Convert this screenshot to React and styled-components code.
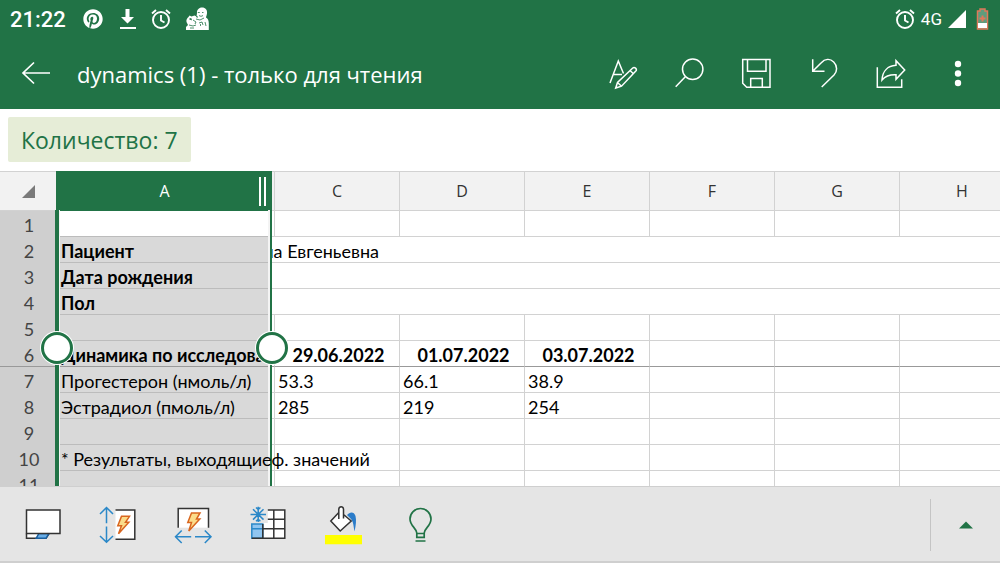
import React from "react";
import styled, { createGlobalStyle, css } from "styled-components";
import { FaPinterest } from "react-icons/fa";

const green = "#217346";
const line = "#d2d2d2";
const uiFont = `"Open Sans", "Noto Sans", sans-serif`;
const cellFont = `Lato, "Noto Sans", sans-serif`;

const GlobalStyle = createGlobalStyle`
  * { box-sizing: border-box; }
  body { margin: 0; background: #fff; font-family: ${uiFont}; overflow: hidden; }
  button { border: 0; padding: 0; margin: 0; background: none; color: inherit; font: inherit; cursor: pointer; }
`;

const Page = styled.div`
  display: flex;
  flex-direction: column;
  height: 100vh;
`;

const AppHeader = styled.header`
  flex: none;
  background: ${green};
  color: #fff;
`;

const StatusBar = styled.div`
  display: flex;
  align-items: center;
  height: 38px;
  padding: 0 6px 0 10px;
  font-family: Roboto, sans-serif;
`;

const Clock = styled.time`
  width: 73px;
  font-size: 22px;
  font-weight: 500;
`;

const StatusIcons = styled.div`
  display: flex;
  align-items: center;
  gap: 14px;
  flex: 1;
`;

const Signals = styled.div`
  display: flex;
  align-items: center;
  gap: 6px;
  font-size: 17px;
`;

const TitleBar = styled.div`
  display: flex;
  align-items: center;
  height: 71px;
  padding: 0 10px 0 2px;
`;

const BackButton = styled.button`
  display: grid;
  place-items: center;
  width: 68px;
  height: 56px;
`;

const Title = styled.h1`
  flex: 1;
  margin: 0;
  padding-left: 7px;
  font-size: 22px;
  line-height: 30px;
  font-weight: 400;
  white-space: nowrap;
`;

const Actions = styled.nav`
  display: flex;
`;

const ActionButton = styled.button`
  display: grid;
  place-items: center;
  width: 67px;
  height: 56px;
`;

const Summary = styled.div`
  flex: none;
  padding: 8px;
  height: 62px;
`;

const SummaryChip = styled.output`
  display: inline-block;
  padding: 1px 13px 0;
  border-radius: 2px;
  background: #e6edd7;
  color: ${green};
  font-size: 23px;
  line-height: 44px;
  white-space: nowrap;
`;

const Sheet = styled.main`
  position: relative;
  flex: 1;
  min-height: 0;
  overflow: hidden;
`;

const Grid = styled.table`
  table-layout: fixed;
  width: 1025px;
  min-width: 100%;
  border-collapse: separate;
  border-spacing: 0;
  font-family: ${cellFont};
  font-size: 18px;
  color: #000;
`;

const ColumnHead = styled.th`
  height: 40px;
  padding: 0;
  border-top: 1px solid ${line};
  border-bottom: 1px solid ${line};
  border-right: 1px solid ${line};
  background: #f2f2f2;
  color: #333;
  font-family: ${uiFont};
  font-size: 16px;
  font-weight: 400;
  ${(p) => p.$selected && css`
    border-color: ${green};
    background: ${green};
    color: #fff;
  `}
  ${(p) => p.$corner && css`
    border-right: 0;
  `}
`;

const HeadContent = styled.div`
  display: grid;
  grid-template-columns: 14px 1fr 12px;
  align-items: center;
`;

const ResizeGrip = styled.span`
  width: 7px;
  height: 29px;
  border: solid #fff;
  border-width: 0 2px;
`;

const CornerMark = styled.span`
  display: block;
  width: 0;
  margin: 0 0 0 22px;
  border-left: 13px solid transparent;
  border-bottom: 13px solid #7a7a7a;
`;

const RowHead = styled.th`
  height: 26px;
  padding: 2px 0 0 2px;
  border-bottom: 1px solid ${(p) => (p.$frozen ? "#999" : "#cfcfcf")};
  background: #cfcfcf;
  color: #444;
  font-size: 18px;
  line-height: 20px;
  font-weight: 400;
`;

const Cell = styled.td`
  height: 26px;
  padding: 2px 0 0 ${(p) => (p.$hidden ? 0 : p.$selected ? 5 : 3)}px;
  border-bottom: 1px solid ${(p) => (p.$frozen ? "#999" : p.$selected ? "#bcbcbc" : line)};
  border-right: 1px solid ${line};
  background: ${(p) => (p.$selected && !p.$active ? "#d9d9d9" : "#fff")};
  font-weight: ${(p) => (p.$bold ? 700 : 400)};
  text-align: ${(p) => (p.$center ? "center" : "left")};
  line-height: 20px;
  white-space: nowrap;
  ${(p) => p.$selected && css`
    border-right: 0;
    text-align: left;
  `}
`;

const Spill = styled.span`
  position: relative;
  z-index: 2;
`;

const ClippedLeft = styled.div`
  display: flex;
  justify-content: flex-end;
  width: 107px;
  overflow: hidden;
`;

const ClippedRight = styled.div`
  overflow: hidden;
`;

const SelectionFrame = styled.div`
  position: absolute;
  z-index: 1;
  top: 39px;
  bottom: 0;
  left: 55px;
  width: 217px;
  border: solid ${green};
  border-width: 0 2px 0 4px;
  box-shadow: inset 1px 0 #f4f4f4, inset -2px 0 #f4f4f4;
  pointer-events: none;
`;

const Handle = styled.span`
  position: absolute;
  z-index: 3;
  top: 161px;
  left: ${(p) => p.$left}px;
  width: 32px;
  height: 32px;
  border: 3px solid ${green};
  border-radius: 50%;
  background: #fff;
  box-shadow: 0 0 0 1px #fff;
`;

const Toolbar = styled.footer`
  display: flex;
  flex: none;
  align-items: center;
  height: 77px;
  padding: 1px 0 0 5px;
  border-top: 1px solid #cfcfcf;
  border-bottom: 2px solid #cfcfcf;
  background: #e5e5e5;
`;

const ToolButton = styled.button`
  display: grid;
  place-items: center;
  width: 75px;
  height: 56px;
`;

const ExpandButton = styled.button`
  display: grid;
  place-items: center;
  width: 70px;
  height: 52px;
  margin-left: auto;
  border-left: 1px solid #c4c4c4;
`;

const Icon = ({ size = 32, width = 1.3, children, ...rest }) => (
  <svg width={size} height={size} viewBox={`0 0 ${size} ${size}`} fill="none" stroke="currentColor" strokeWidth={width} aria-hidden="true" {...rest}>
    {children}
  </svg>
);

const Alarm = () => (
  <Icon size={20} width={1.9}>
    <circle cx="10" cy="11" r="8" />
    <path d="M10 6v5.5l3.500 2M1 4.500 5 1M19 4.500 15 1" />
  </Icon>
);

const Statue = () => (
  <Icon size={24} width={0.8}>
    <path fill="#fff" stroke="none" d="M12 6c-.5-3 2-5.500 5-5.500 3.500 0 5.500 2.500 5 6-.2 2-1 3-1 4 2 1 2.800 3 2.800 6V23H1v-3l2-2-1.500-3c-.5-2 .5-4 2-5l1-1.500 2 1 3-1 2 1z" />
    <path stroke={green} d="M12.800 5.500h2M17 5.500h1.500M14 8.500c1.500 1 2.500 1 4 0M11 12l4 1 4-2M5 12l2 1M8 13l3 2-1 2M4 18l4 1 3-1M14 16l3-1 1 3M5 21h4M20 15l1 4" />
    <path stroke={green} strokeWidth="1.300" d="M4.500 12h2M11.500 9l1 1.500M15 18h1" />
  </Icon>
);

const actions = [
  ["Формат", <><path d="M4 25 12.300 3 17.500 15.500M7.300 16.500H16" /><path d="M9.700 30 11.500 24.500 26.500 10.200c2-1.800 5 .8 3.300 2.800L15.500 28.200zM11.500 24.500l4 3.700M24 12.500l3.500 3.300" /></>],
  ["Поиск", <><circle cx="19.700" cy="11.300" r="10.200" /><path d="M12.300 18.700 2.700 28.700" /></>],
  ["Сохранить", <path d="M2.700 1.500H30V29.300H6.700L2.700 25.300zM7.500 1.500V13.300H26V1.500M10.700 29.300V20.500H22.300V29.300" />],
  ["Отменить", <path d="M5.700 1.300V13.300H17.500M5.700 13.300 14 5C18 .8 23 .5 26.700 4 30.700 8 30.300 13.500 27 17L14.700 29" />],
  ["Поделиться", <><path d="M3.300 9.300V29.300H27.700V21.300" /><path d="M8 22C8.500 13 14 7.800 22 7.300V2.700L30.700 12 22 21.300V16.800C16 16.500 11.500 18 8 22z" /></>],
  ["Ещё", <g fill="#fff" stroke="none"><circle cx="17" cy="6" r="3.200" /><circle cx="17" cy="15.500" r="3.200" /><circle cx="17" cy="25" r="3.200" /></g>],
];

const dark = "#333";
const blue = "#2b88c8";

const tools = [
  ["Карточки", <>
    <path fill="#fff" stroke={dark} d="M3.500 28.500V33.300H23L26 28.500" />
    <path fill="#69aee8" stroke="#1b5f9e" d="M15.800 28.500 13.200 33.300H23L26 28.500z" />
    <path fill="#fff" stroke={dark} d="M3.500 5H37V28.500H3.500z" />
  </>],
  ["Автоподбор высоты", <>
    <path fill="#fff" stroke="none" d="M17.500 5H37V34.300H17.500z" />
    <path stroke={dark} d="M17.500 5H36.800V34.300H17.500" />
    <path stroke={blue} d="M8.500 18.300V2.500M2 9 8.500 2.500 15 9M8.500 21.500V37.300M2 31 8.500 37.300 15 31" />
    <path fill="#fbdc8a" stroke="#d9661f" d="M23.500 11.300h8L27.500 17.300h3.300L20.500 28.700l3-8h-3.700z" />
  </>],
  ["Автоподбор ширины", <>
    <path fill="#fff" stroke={dark} d="M5.200 22.700V3.500H35.500V22.700" />
    <path stroke={blue} d="M18.200 31.700H2.500M8.700 25.500 2.500 31.700 8.700 38M22 31.700H38M31.800 25.500 38 31.700 31.800 38" />
    <path fill="#fbdc8a" stroke="#d9661f" d="M18.500 8h8.500L23.500 14h3.300L15.800 26l2.700-8.500h-3.700z" />
  </>],
  ["Закрепить области", <>
    <path fill="#fff" stroke="none" d="M19.800 5H36.800V33.300H14.800V18H19.800z" />
    <path fill="#90c5f0" stroke={blue} d="M3.800 19H14.800V33.300H3.800zM3.800 23.700H14.800" />
    <path stroke={dark} d="M19.800 5H36.800V33.300H3.800M25.800 5V33.300M14.800 19V33.300M19.800 14.300H36.800M14.800 23.700H36.800" />
    <path stroke={blue} d="M10.200 1.800V17M2.500 9.400H18M5 4.200 15.500 14.600M15.500 4.200 5 14.600M8 2.500l2.200 2 2.200-2M8 16.300l2.200-2 2.200 2" />
  </>],
  ["Цвет заливки", <>
    <path fill="#ff0" stroke="none" d="M2 30H39V39.300H2z" />
    <path fill="#2b7cc9" stroke="none" d="M24 10C27 6.500 31 6.500 32.500 11c1 4 .5 9-1 15.500C30.500 21 30.500 17 28 14z" />
    <path fill="#fff" stroke={dark} d="M15.800 7.500 7.800 16 17.200 26 28.200 16 20.500 9.500V4C20 1 16.300 1 15.800 4V14M20.500 9.500V13.500" />
  </>],
  ["Помощник", <g stroke={green} strokeWidth="1.700">
    <path d="M18.800 32.300V28C18.500 23 12 21 12 14a10.500 10.500 0 0 1 21 0c0 7-6.500 9-6.800 14V32.300zM18.800 28.500H26.200M17.500 36H27.500" />
  </g>],
];

const columns = ["C", "D", "E", "F", "G", "H"];

const rows = [
  { n: 1, active: true },
  { n: 2, a: "Пациент", bold: true, merged: <ClippedLeft>на Евгеньевна</ClippedLeft> },
  { n: 3, a: "Дата рождения", bold: true, merged: true },
  { n: 4, a: "Пол", bold: true, merged: true },
  { n: 5 },
  { n: 6, a: <ClippedRight>Динамика по исследова</ClippedRight>, bold: true, center: true, frozen: true, values: ["29.06.2022", "01.07.2022", "03.07.2022"] },
  { n: 7, a: "Прогестерон (нмоль/л)", values: ["53.3", "66.1", "38.9"] },
  { n: 8, a: "Эстрадиол (пмоль/л)", values: ["285", "219", "254"] },
  { n: 9 },
  { n: 10, a: <Spill>* Результаты, выходящиеф. значений</Spill> },
  { n: 11 },
];

const SheetRow = ({ row }) => (
  <tr>
    <RowHead scope="row" $frozen={row.frozen}>{row.n}</RowHead>
    <Cell $selected $active={row.active} $bold={row.bold} $frozen={row.frozen}>{row.a}</Cell>
    {row.merged ? (
      <Cell $hidden colSpan={7}>{row.merged}</Cell>
    ) : (
      <>
        <Cell $hidden $frozen={row.frozen} />
        {columns.map((name, i) => (
          <Cell key={name} $bold={row.bold} $center={row.center} $frozen={row.frozen}>{row.values?.[i]}</Cell>
        ))}
      </>
    )}
  </tr>
);

export default function App() {
  return (
    <Page>
      <GlobalStyle />
      <AppHeader>
        <StatusBar>
          <Clock>21:22</Clock>
          <StatusIcons>
            <FaPinterest size={20} />
            <Icon size={20}><path fill="#fff" stroke="none" d="M8.500 0h4v8h4.500L10.500 14.500 4 8h4.500zM3 18h16v2H3z" /></Icon>
            <Alarm />
            <Statue />
          </StatusIcons>
          <Signals>
            <Alarm />
            <span>4G</span>
            <Icon size={18}><path fill="#fff" stroke="none" d="M18 0V18H0z" /></Icon>
            <Icon size={22} width={1.500}>
              <path fill="#5f9c7c" stroke="#e0785a" d="M5.500 3H8V1H13V3H15.500V21H5.500z" />
              <path fill="#fff" stroke="none" d="M6 15H15V20H6z" />
              <path stroke="#e0785a" strokeWidth="2" d="M10.500 7.500V13.500M7.500 10.500H13.500" />
            </Icon>
          </Signals>
        </StatusBar>
        <TitleBar>
          <BackButton aria-label="Назад">
            <Icon width={1.700}><path d="M30 15H3M14 4.500 3 15 14 25.500" /></Icon>
          </BackButton>
          <Title>dynamics (1) - только для чтения</Title>
          <Actions>
            {actions.map(([label, art]) => (
              <ActionButton key={label} aria-label={label}><Icon width={1.500}>{art}</Icon></ActionButton>
            ))}
          </Actions>
        </TitleBar>
      </AppHeader>
      <Summary>
        <SummaryChip>Количество: 7</SummaryChip>
      </Summary>
      <Sheet>
        <Grid>
          <colgroup>
            <col style={{ width: 56 }} />
            <col style={{ width: 216 }} />
            <col style={{ width: 3 }} />
            {columns.map((name) => <col key={name} style={{ width: 125 }} />)}
          </colgroup>
          <thead>
            <tr>
              <ColumnHead $corner><CornerMark /></ColumnHead>
              <ColumnHead scope="col" $selected>
                <HeadContent><span /><span>A</span><ResizeGrip /></HeadContent>
              </ColumnHead>
              <ColumnHead />
              {columns.map((name) => <ColumnHead key={name} scope="col">{name}</ColumnHead>)}
            </tr>
          </thead>
          <tbody>
            {rows.map((row) => <SheetRow key={row.n} row={row} />)}
          </tbody>
        </Grid>
        <SelectionFrame />
        <Handle $left={41} />
        <Handle $left={256} />
      </Sheet>
      <Toolbar>
        {tools.map(([label, art]) => (
          <ToolButton key={label} aria-label={label}><Icon size={40} width={1.500}>{art}</Icon></ToolButton>
        ))}
        <ExpandButton aria-label="Развернуть">
          <Icon size={14}><path fill={green} stroke="none" d="M7 3.500 14 10.500H0z" /></Icon>
        </ExpandButton>
      </Toolbar>
    </Page>
  );
}
